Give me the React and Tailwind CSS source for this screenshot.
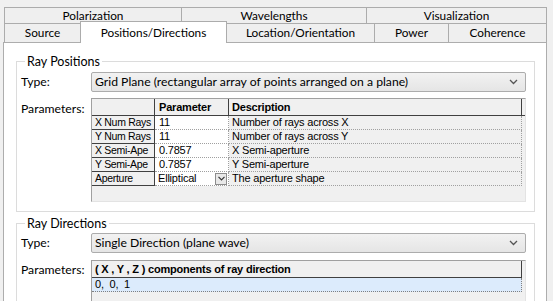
import React from "react";

const ui = { fontFamily: "Lato, 'Liberation Sans', sans-serif" };
const grid = { fontFamily: "'Liberation Sans', Arial, sans-serif" };

function Chevron() {
  return (
    <svg width="9" height="6" viewBox="0 0 9 6" className="shrink-0">
      <polyline points="1,1 4.5,4.5 8,1" fill="none" stroke="#555" strokeWidth="1.3" />
    </svg>
  );
}

function Combo({ text }) {
  return (
    <div className="flex h-[20px] w-[435px] items-center justify-between rounded-[2px] border border-[#acacac] bg-gradient-to-b from-[#f2f2f2] to-[#e5e5e5] pl-[3px] pr-[7px] text-[12.2px] text-black">
      <span className="whitespace-nowrap">{text}</span>
      <Chevron />
    </div>
  );
}

function GroupBox({ title, className, children }) {
  return (
    <fieldset className={`border border-[#dcdcdc] pl-[4px] pr-[7px] ${className}`}>
      <legend className="ml-[4px] px-[2px] text-[12.5px] leading-[15px] text-black">{title}</legend>
      {children}
    </fieldset>
  );
}

const rows = [
  ["X Num Rays", "11", "Number of rays across X"],
  ["Y Num Rays", "11", "Number of rays across Y"],
  ["X Semi-Ape", "0.7857", "X Semi-aperture"],
  ["Y Semi-Ape", "0.7857", "Y Semi-aperture"],
];

const cell = "flex items-center overflow-hidden whitespace-nowrap leading-none";

function ParamTable() {
  return (
    <div className="h-[104px] w-[435px] border border-[#a0a0a0] border-b-[#e3e3e3] border-r-[#e3e3e3] bg-[#f0f0f0] text-[11px] tracking-[-0.2px] text-black" style={grid}>
      <div className="grid h-[17px] grid-cols-[63px_74px_293px] border-b border-[#404040]">
        <div className="border-r border-[#404040] bg-[#f0f0f0]" />
        <div className={`${cell} border-r border-[#404040] pl-[4px] font-bold`}>Parameter</div>
        <div className={`${cell} border-r border-[#404040] pl-[3px] font-bold`}>Description</div>
      </div>
      {rows.map(([name, val, desc]) => (
        <div key={name} className="grid h-[14px] grid-cols-[63px_74px_293px]">
          <div className={`${cell} border-r border-b border-[#404040] pl-[3px] text-[10.5px] tracking-[-0.3px]`}>{name}</div>
          <div className={`${cell} border-r border-b border-dotted border-[#a0a0a0] bg-white pl-[4px]`}>{val}</div>
          <div className={`${cell} border-r border-b border-dotted border-[#a0a0a0] pl-[3px]`}>{desc}</div>
        </div>
      ))}
      <div className="grid h-[14px] grid-cols-[63px_74px_293px]">
        <div className={`${cell} border-r border-b border-[#404040] pl-[3px] text-[10.5px] tracking-[-0.3px]`}>Aperture</div>
        <div className={`${cell} justify-between border-r border-b border-dotted border-[#a0a0a0] bg-white pl-[3px] pr-[1px]`}>
          <span>Elliptical</span>
          <span className="flex h-[12px] w-[12px] items-center justify-center border border-[#8c8c8c] bg-[#e8e8e8]">
            <svg width="7" height="5" viewBox="0 0 7 5">
              <polyline points="0.5,0.8 3.5,3.8 6.5,0.8" fill="none" stroke="#333" strokeWidth="1.2" />
            </svg>
          </span>
        </div>
        <div className={`${cell} border-r border-b border-dotted border-[#a0a0a0] pl-[3px]`}>The aperture shape</div>
      </div>
    </div>
  );
}

function DirTable() {
  return (
    <div className="h-[60px] w-[435px] border border-[#a0a0a0] border-r-[#e3e3e3] bg-[#f0f0f0] text-[11px] tracking-[-0.2px] text-black" style={grid}>
      <div className={`${cell} h-[17px] w-[430px] border-r border-b border-[#404040] pl-[3px] font-bold`}>
        ( X , Y , Z ) components of ray direction
      </div>
      <div className={`${cell} h-[14px] w-[430px] border-r border-b border-dotted border-[#808080] bg-[#dcebfc] pl-[3px]`}>
        0,&nbsp; 0,&nbsp; 1
      </div>
    </div>
  );
}

export default function App() {
  const tab = "flex items-center justify-center whitespace-nowrap border-[#acacac] bg-[#efefef] text-[11.8px] text-black";
  return (
    <div className="h-[301px] w-[553px] overflow-hidden bg-[#f0f0f0]" style={ui}>
      <div className="pl-[4px] pt-[7px]">
        {/* Tab rows */}
        <div className="flex h-[16px]">
          <div className={`${tab} w-[178px] border-l border-t border-r`}>Polarization</div>
          <div className={`${tab} w-[185px] border-t border-r`}>Wavelengths</div>
          <div className={`${tab} w-[180px] border-t border-r`}>Visualization</div>
        </div>
        <div className="flex h-[19px] items-end">
          <div className={`${tab} h-[19px] w-[76px] border-l border-t`}>Source</div>
          <div className="relative z-10 -mb-px flex h-[22px] w-[147px] items-start justify-center whitespace-nowrap border-l border-t border-r border-[#acacac] bg-white pt-[2px] text-[11.8px] text-black">
            Positions/Directions
          </div>
          <div className={`${tab} h-[19px] w-[148px] border-t border-r`}>Location/Orientation</div>
          <div className={`${tab} h-[19px] w-[74px] border-t border-r`}>Power</div>
          <div className={`${tab} h-[19px] w-[98px] border-t border-r`}>Coherence</div>
        </div>
      </div>

      {/* Page panel */}
      <div className="ml-[3px] h-[270px] w-[544px] border border-[#adadad] bg-white pl-[12px] pr-[11px] pt-[11px]">
        <GroupBox title="Ray Positions" className="pb-[9px]">
          <div className="mt-[3px] grid grid-cols-[70px_1fr] gap-y-[6px]">
            <div className="flex items-center text-[12.2px]">Type:</div>
            <Combo text="Grid Plane (rectangular array of points arranged on a plane)" />
            <div className="pt-[2px] text-[12.2px]">Parameters:</div>
            <ParamTable />
          </div>
        </GroupBox>

        <GroupBox title="Ray Directions" className="mt-[4px] h-[130px]">
          <div className="mt-[2px] grid grid-cols-[70px_1fr] gap-y-[7px]">
            <div className="flex items-center text-[12.2px]">Type:</div>
            <Combo text="Single Direction (plane wave)" />
            <div className="pt-[1px] text-[12.2px]">Parameters:</div>
            <DirTable />
          </div>
        </GroupBox>
      </div>
    </div>
  );
}
